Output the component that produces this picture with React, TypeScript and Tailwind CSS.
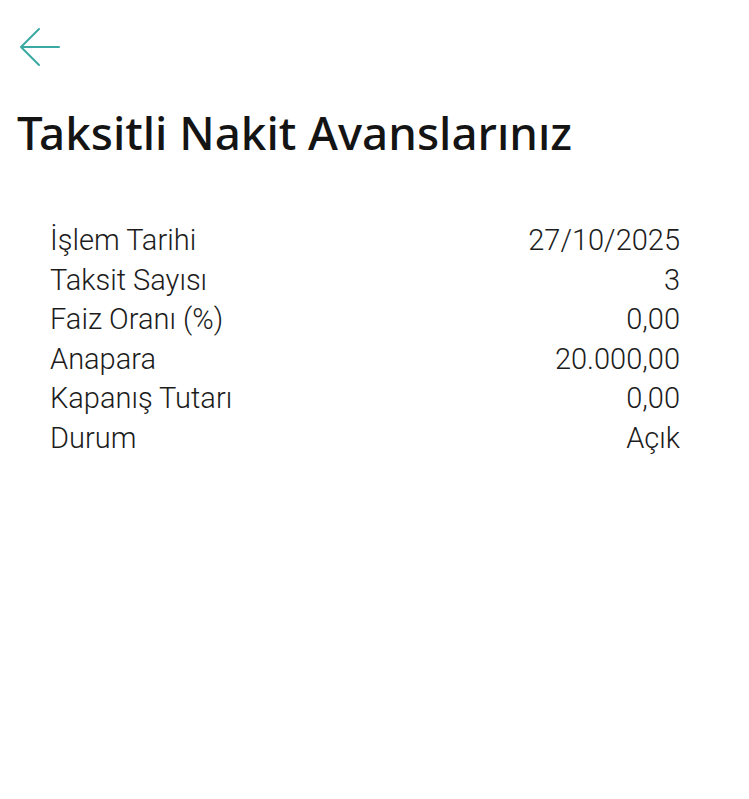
const ROWS = [
  { label: "İşlem Tarihi", value: "27/10/2025" },
  { label: "Taksit Sayısı", value: "3" },
  { label: "Faiz Oranı (%)", value: "0,00" },
  { label: "Anapara", value: "20.000,00" },
  { label: "Kapanış Tutarı", value: "0,00" },
  { label: "Durum", value: "Açık" },
];

function BackArrow() {
  return (
    <svg width="44" height="42" viewBox="0 0 44 42" fill="none">
      <path
        d="M41 21 H3 M21 3 L3 21 L21 39"
        stroke="#3aa9a4"
        strokeWidth="2"
        strokeLinecap="round"
        strokeLinejoin="round"
      />
    </svg>
  );
}

export default function App() {
  return (
    <div className="min-h-[799px] w-full bg-white font-['Roboto',sans-serif]">
      <div className="pl-[18px] pt-[26px]">
        <BackArrow />
      </div>

      <h1 className="mt-[36px] pl-[17px] font-['Noto_Sans',sans-serif] text-[45.7px] leading-[56px] font-medium text-[#141414]">
        Taksitli Nakit Avanslarınız
      </h1>

      <div className="mt-[61px] flex flex-col pl-[50px] pr-[69px] text-[29px] leading-[39.5px] font-light text-[#1c1c1c]">
        {ROWS.map((r) => (
          <div key={r.label} className="flex justify-between">
            <span>{r.label}</span>
            <span>{r.value}</span>
          </div>
        ))}
      </div>
    </div>
  );
}
